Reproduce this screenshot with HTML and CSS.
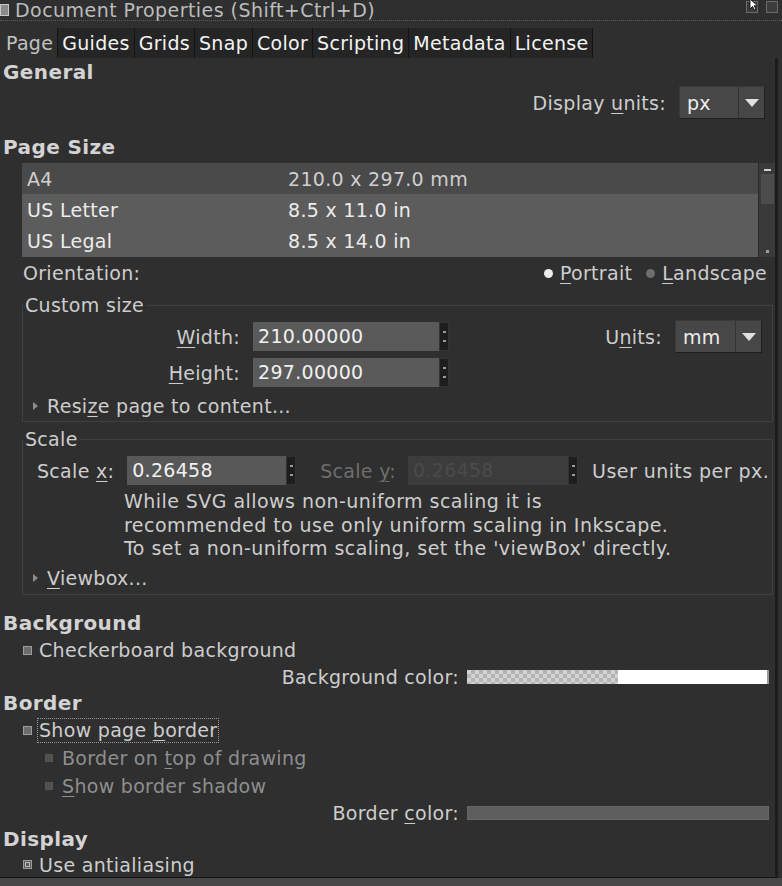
FILE: index.html
```html
<!DOCTYPE html>
<html>
<head>
<meta charset="utf-8">
<title>Document Properties</title>
<link rel="stylesheet" href="styles.css">
</head>
<body>
<div class="window">
  <div class="titlebar">
    <span class="appicon"></span>
    <span class="title">Document Properties (Shift+Ctrl+D)</span>
    <span class="winbtns">
      <span class="wb"></span><span class="wb"></span>
      <svg class="cursor" width="12" height="12" viewBox="0 0 12 12"><polygon points="1,0 1,10 3.5,7.5 5.5,11 7,10.3 5.2,6.8 8.5,6.8" fill="#fff" stroke="#000" stroke-width="0.8"/></svg>
    </span>
  </div>

  <div class="tabs">
    <div class="tab active">Page</div>
    <div class="tab">Guides</div>
    <div class="tab">Grids</div>
    <div class="tab">Snap</div>
    <div class="tab">Color</div>
    <div class="tab">Scripting</div>
    <div class="tab">Metadata</div>
    <div class="tab">License</div>
  </div>

  <div class="panel">
    <div class="heading h-general">General</div>
    <div class="units-row">
      <span class="lbl">Display <u>u</u>nits:</span>
      <div class="combo combo-px"><span class="combo-val">px</span><span class="combo-btn"><svg width="14" height="8" viewBox="0 0 14 8"><polygon points="0,0 14,0 7,8" fill="#e0e0e0"/></svg></span></div>
    </div>

    <div class="heading h-pagesize">Page Size</div>
    <div class="list">
      <div class="list-rows">
        <div class="lrow r-a4"><span class="c1">A4</span><span class="c2">210.0 x 297.0 mm</span></div>
        <div class="lrow sel"><span class="c1">US Letter</span><span class="c2">8.5 x 11.0 in</span></div>
        <div class="lrow sel"><span class="c1">US Legal</span><span class="c2">8.5 x 14.0 in</span></div>
      </div>
      <div class="scrollbar">
        <span class="sb-up"></span>
        <span class="sb-thumb"></span>
        <span class="sb-down"></span>
      </div>
    </div>

    <div class="orient">
      <span class="orient-lbl">Orientation:</span>
      <span class="radios">
        <span class="radio on"></span><span class="rlbl"><u>P</u>ortrait</span>
        <span class="radio off"></span><span class="rlbl"><u>L</u>andscape</span>
      </span>
    </div>

    <fieldset class="frame custom">
      <legend>Custom size</legend>
      <div class="size-row first">
        <span class="flabel"><u>W</u>idth:</span>
        <span class="spin"><span class="entry">210.00000</span><span class="spinbtn"><i></i><i></i></span></span>
        <span class="spacer"></span>
        <span class="lbl">U<u>n</u>its:</span>
        <div class="combo combo-mm"><span class="combo-val">mm</span><span class="combo-btn"><svg width="14" height="8" viewBox="0 0 14 8"><polygon points="0,0 14,0 7,8" fill="#e0e0e0"/></svg></span></div>
      </div>
      <div class="size-row second">
        <span class="flabel"><u>H</u>eight:</span>
        <span class="spin"><span class="entry">297.00000</span><span class="spinbtn"><i></i><i></i></span></span>
      </div>
      <div class="expander resize"><span class="tri"></span><span>Resi<u>z</u>e page to content...</span></div>
    </fieldset>

    <fieldset class="frame scale">
      <legend>Scale</legend>
      <div class="scale-row">
        <span class="slabel">Scale <u>x</u>:</span>
        <span class="spin sx"><span class="entry">0.26458</span><span class="spinbtn"><i></i><i></i></span></span>
        <span class="slabel dis">Scale <u>y</u>:</span>
        <span class="spin sy disabled"><span class="entry">0.26458</span><span class="spinbtn"><i></i><i></i></span></span>
        <span class="uu">User units per px.</span>
      </div>
      <p class="note">While SVG allows non-uniform scaling it is<br>recommended to use only uniform scaling in Inkscape.<br>To set a non-uniform scaling, set the 'viewBox' directly.</p>
      <div class="expander viewbox"><span class="tri"></span><span><u>V</u>iewbox...</span></div>
    </fieldset>

    <div class="heading r27 h-bg">Background</div>
    <div class="check r27"><span class="cb"></span><span>Checkerboard background</span></div>
    <div class="color-row r26"><span class="lbl">Background color:</span><span class="swatch checker"><span class="sw-white"></span></span></div>

    <div class="heading r27">Border</div>
    <div class="check r27"><span class="cb"></span><span class="focus">Show page <u>b</u>order</span></div>
    <div class="check sub r28"><span class="cb"></span><span>Border on <u>t</u>op of drawing</span></div>
    <div class="check sub r28"><span class="cb"></span><span><u>S</u>how border shadow</span></div>
    <div class="color-row r26"><span class="lbl">Border <u>c</u>olor:</span><span class="swatch grey"></span></div>

    <div class="heading r26">Display</div>
    <div class="check r26"><span class="cb checked"></span><span>Use antialiasing</span></div>
  </div>
  <div class="footer"></div>
</div>
</body>
</html>
```

FILE: styles.css
```css
* { box-sizing: border-box; }
html, body { margin: 0; padding: 0; }
body {
  background: #2f2f2f;
  font-family: "DejaVu Sans", "Liberation Sans", sans-serif;
  font-size: 19px;
  letter-spacing: 0.3px;
  color: #cdcdcd;
  width: 782px;
  height: 886px;
  overflow: hidden;
}
u { text-decoration: underline; text-underline-offset: 3px; text-decoration-thickness: 1px; }

.window { width: 782px; height: 886px; display: flex; flex-direction: column; }

/* title bar */
.titlebar {
  position: relative;
  height: 21px;
  display: flex;
  align-items: center;
  border-bottom: 1px dotted #5c5c5c;
  color: #bcbcbc;
  line-height: 20px;
  white-space: nowrap;
}
.title { letter-spacing: 0.45px; }
.appicon {
  width: 9px; height: 12px;
  margin: 0 6px 0 0;
  background: #8a8a8a;
  border: 1px solid #c8c8c8;
  flex: none;
}
.winbtns { margin-left: auto; margin-right: 4px; display: flex; gap: 8px; align-self: flex-start; margin-top: 1px; position: relative; }
.wb { width: 12px; height: 12px; border: 1px solid #6a6a6a; background: #3c3c3c; }
.cursor { position: absolute; left: 3px; top: -2px; }

/* tabs */
.tabs {
  display: flex;
  margin-top: 7px;
  height: 30px;
  padding-left: 3px;
}
.tab {
  padding: 0 4px;
  line-height: 30px;
  background: #252525;
  color: #f3f3f3;
  border-left: 1px solid #141414;
  white-space: nowrap;
}
.tab.active { background: #2f2f2f; color: #c2c2c2; border-left: none; padding: 0 4px 0 3px; }
.tab:last-child { border-right: 1px solid #141414; }

/* panel */
.panel {
  width: 778px;
  height: 820px;
  border-right: 3px solid #1c1c1c;
  border-bottom: 1px solid #141414;
  overflow: hidden;
}
.footer { flex: 1; background: #474747; }

.heading {
  font-weight: bold;
  font-size: 20px;
  letter-spacing: 0.4px;
  color: #d3d3d3;
  height: 24px;
  line-height: 24px;
  padding-left: 3px;
}
.h-general { margin-top: 2px; }
.h-pagesize { margin-top: 16px; }
.h-bg { margin-top: 15px; }
.r26 { height: 26px; }
.r27 { height: 27px; }
.r28 { height: 28px; }
.heading.r26, .heading.r27 { line-height: normal; display: flex; align-items: center; }

.units-row {
  margin-top: 2px;
  height: 33px;
  display: flex;
  align-items: center;
  justify-content: flex-end;
  padding-right: 10px;
  gap: 13px;
}

.combo {
  height: 33px;
  display: flex;
  align-items: center;
  background: #474747;
  border: 1px solid #3a3a3a;
  border-right-color: #1e1e1e;
  border-bottom-color: #1e1e1e;
  color: #ededed;
}
.combo-px { width: 86px; }
.combo-mm { width: 87px; }
.combo-val { flex: 1; padding-left: 7px; }
.combo-btn {
  width: 26px; height: 100%;
  border-left: 1px solid #333;
  display: flex; align-items: center; justify-content: center;
}

/* list */
.list {
  margin-top: 4px;
  margin-left: 22px;
  height: 94px;
  display: flex;
}
.list-rows { flex: 1; display: flex; flex-direction: column; }
.lrow {
  height: 31.33px;
  display: flex;
  align-items: center;
  background: #5c5c5c;
  color: #ececec;
}
.lrow.r-a4 { background: #4a4a4a; color: #cfcfcf; }
.c1 { width: 266px; padding-left: 5px; }
.c2 { flex: 1; }
.scrollbar {
  width: 17px;
  background: #3a3a3a;
  border-left: 1px solid #2a2a2a;
  display: flex; flex-direction: column; align-items: center;
}
.sb-up { width: 7px; height: 2px; background: #cfcfcf; margin-top: 6px; }
.sb-thumb { width: 13px; height: 30px; background: #4c4c4c; margin-top: 3px; }
.sb-down { width: 3px; height: 3px; background: #9a9a9a; margin-top: auto; margin-bottom: 4px; }

/* orientation */
.orient {
  height: 32px;
  display: flex;
  align-items: center;
  padding-left: 23px;
  padding-right: 8px;
}
.radios { margin-left: auto; display: flex; align-items: center; }
.radio { width: 9px; height: 9px; border-radius: 50%; margin-right: 7px; }
.radio.on { background: #ececec; }
.radio.off { background: #6e6e6e; margin-left: 14px; }

/* frames */
.frame {
  margin: 5px 2px 0 22px;
  padding: 0 0 3px 0;
  border: 1px solid #404040;
  min-width: 0;
}
.frame legend {
  padding: 0 2px;
  line-height: 22px;
  color: #cdcdcd;
}
.frame.scale { margin-top: 6px; padding-bottom: 4px; }

.size-row { display: flex; align-items: center; }
.size-row.first { margin-top: 4px; height: 33px; padding-right: 10px; }
.size-row.second { margin-top: 5px; height: 29px; }
.flabel { width: 217px; text-align: right; margin-right: 13px; }
.spacer { flex: 1; }
.size-row .lbl { margin-right: 13px; }

.spin { display: flex; height: 29px; }
.entry {
  background: #5a5a5a;
  color: #f1f1f1;
  padding-left: 5px;
  line-height: 29px;
}
.size-row .entry { width: 186px; }
.spinbtn {
  width: 10px;
  background: #1e1e1e;
  border: 1px solid #333;
  display: flex; flex-direction: column; align-items: center; justify-content: space-around;
  padding: 5px 0;
}
.spinbtn i { display: block; width: 3px; height: 2px; background: #9a9a9a; }

.expander { height: 24px; display: flex; align-items: center; padding-left: 10px; }
.expander.resize { margin-top: 7px; }
.expander.viewbox { margin-top: 5px; }
.tri {
  width: 0; height: 0;
  border-top: 4px solid transparent;
  border-bottom: 4px solid transparent;
  border-left: 5px solid #8c8c8c;
  margin-right: 9px;
}

.scale-row { margin-top: 6px; height: 29px; display: flex; align-items: center; padding-left: 14px; }
.slabel { margin-right: 13px; }
.slabel.dis { color: #6e6e6e; margin-left: 24px; margin-right: 12px; }
.spin.sx .entry { width: 159px; background: #585858; }
.spin.sy .entry { width: 160px; background: #3c3c3c; color: #4b4b4b; }
.uu { margin-left: 14px; letter-spacing: 0.45px; }

.note {
  margin: 5px 0 0 101px;
  line-height: 23.5px;
  letter-spacing: 0.45px;
  color: #cdcdcd;
}

/* checks */
.check { display: flex; align-items: center; padding-left: 23px; }
.cb {
  width: 9px; height: 9px;
  background: #6c6c6c;
  border: 1px solid #9c9c9c;
  margin-right: 7px;
  flex: none;
}
.cb.checked { position: relative; background: #5c5c5c; }
.cb.checked::after {
  content: "";
  position: absolute; left: 1px; top: 1px;
  width: 3px; height: 3px;
  border: 1px solid #bbb;
}
.check.sub { padding-left: 45px; color: #8e8e8e; }
.check.sub .cb { width: 8px; height: 8px; background: #505050; border-color: #555; margin-right: 9px; }
.focus { border: 1px dotted #9a9a9a; padding: 0 1px; line-height: 23px; margin-left: -2px; }

.color-row { display: flex; align-items: center; justify-content: flex-end; padding-right: 6px; }
.color-row .lbl { margin-right: 8px; }
.swatch { width: 302px; height: 14px; display: flex; }
.swatch.checker {
  background: repeating-conic-gradient(#b4b4b4 0 25%, #d2d2d2 0 50%) 0 0 / 8px 8px;
  justify-content: flex-end;
  border-right: 2px solid #9a9a9a;
}
.sw-white { width: 149px; height: 100%; background: #ffffff; }
.swatch.grey { background: #5e5e5e; border: 1px solid #666; }
```
